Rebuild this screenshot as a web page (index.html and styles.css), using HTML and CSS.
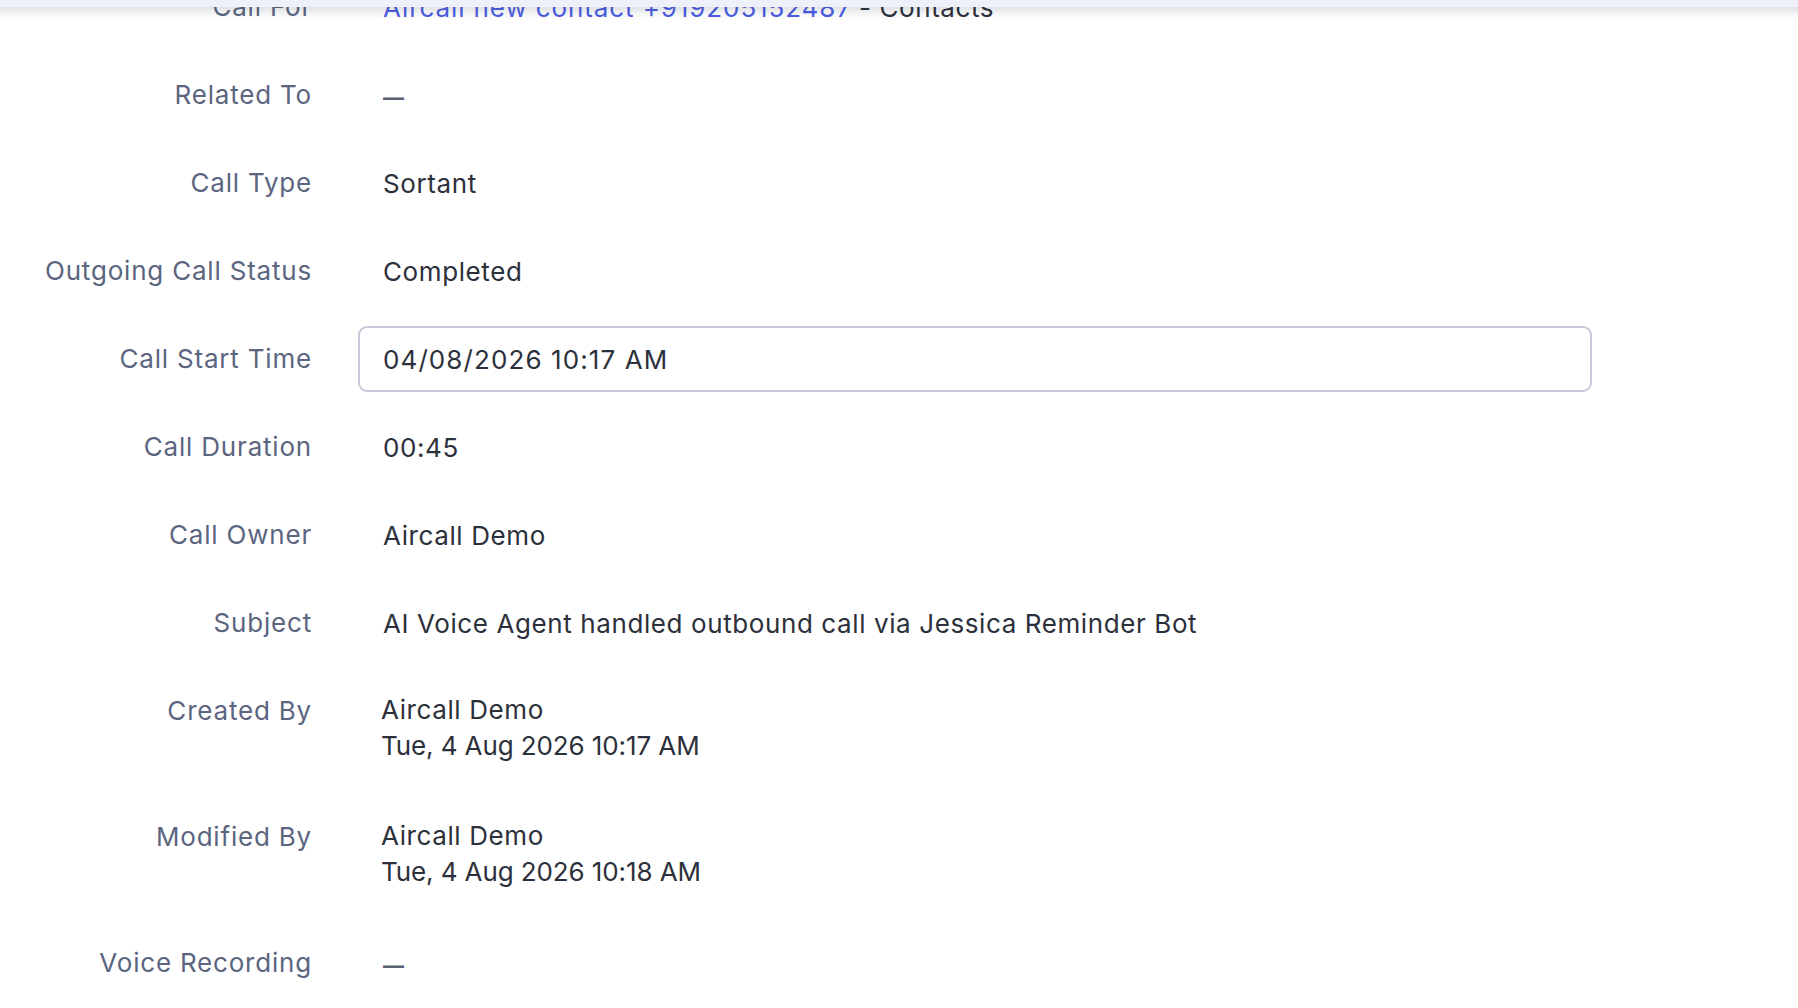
FILE: index.html
```html
<!DOCTYPE html>
<html lang="en">
<head>
    <meta charset="UTF-8">
    <meta name="viewport" content="width=device-width, initial-scale=1.0">
    <title>Call Details</title>
    <link rel="stylesheet" href="styles.css">
</head>
<body>
    <div class="top-bar"></div>

    <div class="details">
        <div class="field">
            <div class="field-label">Call For</div>
            <div class="field-value"><a class="link" href="#">Aircall new contact +919205152487</a> - Contacts</div>
        </div>
        <div class="field">
            <div class="field-label">Related To</div>
            <div class="field-value empty">&mdash;</div>
        </div>
        <div class="field">
            <div class="field-label">Call Type</div>
            <div class="field-value">Sortant</div>
        </div>
        <div class="field">
            <div class="field-label">Outgoing Call Status</div>
            <div class="field-value">Completed</div>
        </div>
        <div class="field">
            <div class="field-label">Call Start Time</div>
            <div class="field-value editing">04/08/2026 10:17 AM</div>
        </div>
        <div class="field">
            <div class="field-label">Call Duration</div>
            <div class="field-value">00:45</div>
        </div>
        <div class="field">
            <div class="field-label">Call Owner</div>
            <div class="field-value">Aircall Demo</div>
        </div>
        <div class="field">
            <div class="field-label">Subject</div>
            <div class="field-value">AI Voice Agent handled outbound call via Jessica Reminder Bot</div>
        </div>
        <div class="field">
            <div class="field-label">Created By</div>
            <div class="field-value multi">
                <span>Aircall Demo</span>
                <span class="stamp">Tue, 4 Aug 2026 10:17 AM</span>
            </div>
        </div>
        <div class="field">
            <div class="field-label">Modified By</div>
            <div class="field-value multi">
                <span>Aircall Demo</span>
                <span class="stamp">Tue, 4 Aug 2026 10:18 AM</span>
            </div>
        </div>
        <div class="field">
            <div class="field-label">Voice Recording</div>
            <div class="field-value empty">&mdash;</div>
        </div>
    </div>
</body>
</html>
```

FILE: styles.css
```css
body {
    font-family: Inter, "Noto Sans", sans-serif;
    margin: 0;
    padding: 0;
    background-color: #fff;
    color: #2c303b;
    overflow: hidden;
}

/* Sticky header strip with its drop shadow */
.top-bar {
    position: fixed;
    top: 0;
    left: 0;
    right: 0;
    height: 7px;
    background-color: #eef1f9;
    z-index: 10;
}

.top-bar::after {
    content: "";
    position: absolute;
    top: 7px;
    left: 0;
    right: 0;
    height: 13px;
    background: linear-gradient(rgba(40, 45, 60, 0.14), rgba(40, 45, 60, 0.04) 60%, rgba(40, 45, 60, 0));
}

/* Page is scrolled a little past the first row */
.details {
    margin-top: -37px;
    width: 1592px;
}

.field {
    display: grid;
    grid-template-columns: 312px 1fr;
    column-gap: 46px;
    padding: 11px 0;
    font-size: 26px;
}

.field-label {
    text-align: right;
    color: #5b6580;
    line-height: 66px;
    letter-spacing: 0.8px;
    white-space: nowrap;
}

.field-value {
    min-height: 66px;
    box-sizing: border-box;
    padding: 0 23px;
    display: flex;
    align-items: center;
    border: 2px solid transparent;
    border-radius: 9px;
    letter-spacing: 0.6px;
    white-space: nowrap;
}

.field-value.editing {
    border-color: #c9c8d9;
    letter-spacing: 1.1px;
}

.field-value.empty {
    color: #5a6072;
    font-size: 21px;
    font-weight: 700;
    padding-top: 4px;
    padding-left: 23px;
}

.field-value.multi {
    flex-direction: column;
    align-items: flex-start;
    justify-content: flex-start;
    padding-top: 12px;
    padding-bottom: 16px;
    padding-left: 21px;
    line-height: 36px;
}

.stamp {
    letter-spacing: -0.1px;
}

.link {
    color: #4b5de8;
    text-decoration: none;
    margin-right: 7px;
    letter-spacing: 0.9px;
}
```
